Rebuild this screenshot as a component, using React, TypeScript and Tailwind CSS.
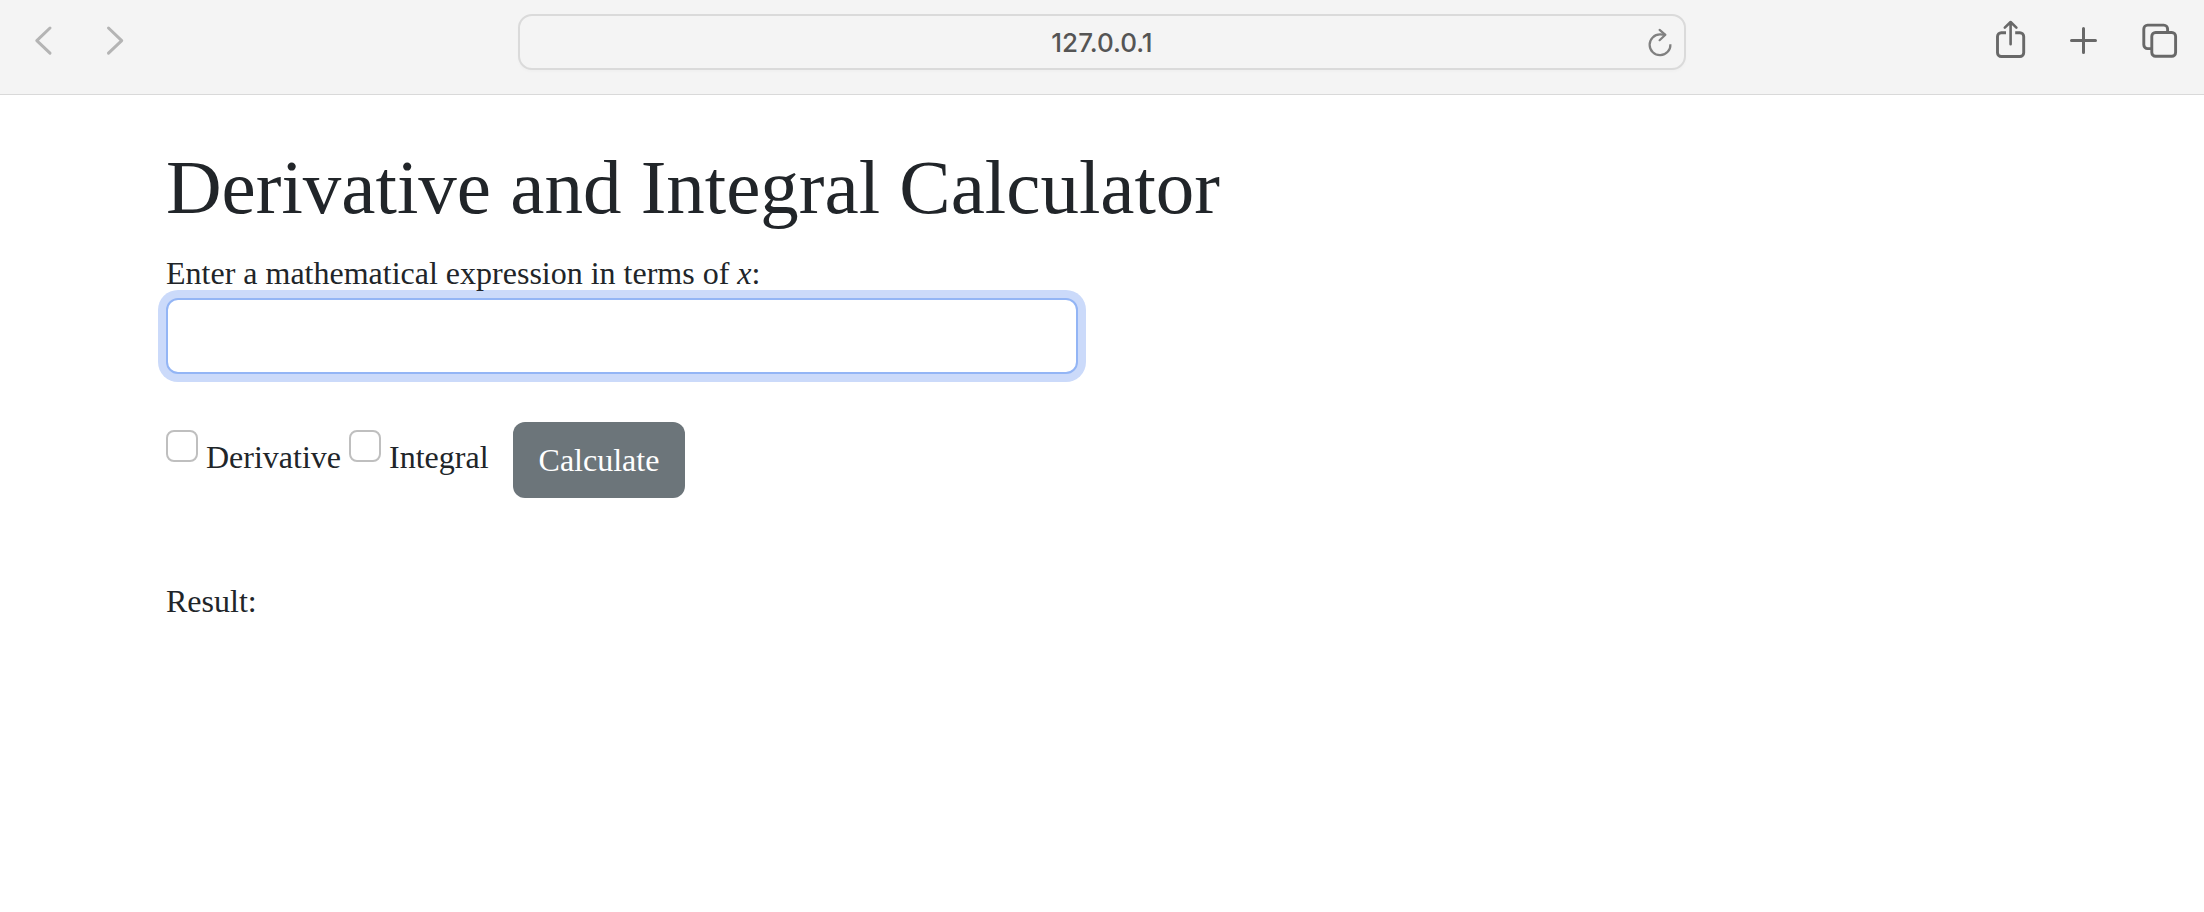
import { useState } from "react";

function Toolbar() {
  return (
    <header className="grid grid-cols-[1fr_53%_1fr] items-center border-b border-[#d9d9d9] bg-[#f4f4f4] pt-[14px] pb-6">
      <nav className="flex gap-12 pl-8 text-[#b4b4b4]" aria-label="History">
        <button type="button" aria-label="Back">
          <svg className="h-14 w-6" viewBox="0 0 24 56" fill="none" stroke="currentColor" strokeWidth="3" strokeLinecap="round" strokeLinejoin="round">
            <path d="M18 14 4.8 26.6 18 39.2" />
          </svg>
        </button>
        <button type="button" aria-label="Forward">
          <svg className="h-14 w-6" viewBox="0 0 24 56" fill="none" stroke="currentColor" strokeWidth="3" strokeLinecap="round" strokeLinejoin="round">
            <path d="M4.5 14 17.7 26.6 4.5 39.2" />
          </svg>
        </button>
      </nav>

      <div className="relative">
        <input
          type="text"
          aria-label="Address"
          defaultValue="127.0.0.1"
          className="block h-14 w-full rounded-[14px] border-2 border-[#dadada] bg-[#f4f4f4] px-12 text-center font-['Inter',sans-serif] text-[26px] font-medium text-[#555555] shadow-[0_2px_3px_rgba(0,0,0,0.02)] outline-none"
        />
        <button type="button" aria-label="Reload" className="absolute top-3 right-3 text-[#808080]">
          <svg className="h-8 w-7" viewBox="0 0 28 32" fill="none" stroke="currentColor" strokeWidth="2.2" strokeLinecap="round" strokeLinejoin="round">
            <path strokeLinecap="butt" d="M24.4 18.2A10.4 10.4 0 1 1 14.2 8.4L19.4 8.8" />
            <path d="M13.6 3.9 19.4 8.8 13.6 14.2" />
          </svg>
        </button>
      </div>

      <div className="flex justify-end gap-10 pr-6 text-[#686868]">
        <button type="button" aria-label="Share">
          <svg className="h-14 w-[34px]" viewBox="0 0 34 56" fill="none" stroke="currentColor" strokeWidth="2.9" strokeLinecap="round" strokeLinejoin="round">
            <path strokeLinecap="butt" d="M12 18.7H7.3a3.8 3.8 0 0 0-3.8 3.8V38.7a3.8 3.8 0 0 0 3.8 3.8H25.9a3.8 3.8 0 0 0 3.8-3.8V22.5a3.8 3.8 0 0 0-3.8-3.8H21.2" />
            <path strokeWidth="2.6" d="M16.6 30.2V8.2M10.8 13.6 16.6 8 22.4 13.6" />
          </svg>
        </button>
        <button type="button" aria-label="New tab">
          <svg className="h-14 w-8" viewBox="0 0 32 56" fill="none" stroke="currentColor" strokeWidth="3" strokeLinecap="round">
            <path d="M3.5 26.5H27.5M15.5 14.5V38.5" />
          </svg>
        </button>
        <button type="button" aria-label="Tab overview">
          <svg className="h-14 w-10" viewBox="0 0 40 56" fill="none" stroke="currentColor" strokeWidth="2.9">
            <rect x="11.8" y="18.5" width="23.8" height="23.8" rx="3.8" />
            <path d="M11.8 34.6H7.6a3.8 3.8 0 0 1-3.8-3.8V14.9A3.8 3.8 0 0 1 7.6 11.1H23.8a3.8 3.8 0 0 1 3.8 3.8V18.5" />
          </svg>
        </button>
      </div>
    </header>
  );
}

function CheckOption({ id, label }: { id: string; label: string }) {
  const [checked, setChecked] = useState(false);
  return (
    <div className="flex items-start gap-2">
      <input
        id={id}
        type="checkbox"
        checked={checked}
        onChange={(e) => setChecked(e.target.checked)}
        className="mt-2 size-8 appearance-none rounded-lg border-2 border-[#bfbfbf] bg-white checked:border-[#0d6efd] checked:bg-[#0d6efd]"
      />
      <label htmlFor={id} className="mt-[11px]">
        {label}
      </label>
    </div>
  );
}

export default function App() {
  return (
    <div className="min-h-screen bg-white">
      <Toolbar />
      <main className="mx-auto max-w-[1920px] px-6 pt-[46px] font-['Liberation_Serif',serif] text-[32px] leading-[48px] text-[#212529]">
        <h1 className="mb-4 text-[77px] leading-[92px]">Derivative and Integral Calculator</h1>
        <form onSubmit={(e) => e.preventDefault()}>
          <label htmlFor="expression" className="block">
            Enter a mathematical expression in terms of <i>x</i>:
          </label>
          <input
            id="expression"
            type="text"
            autoComplete="off"
            className="mt-px block h-[76px] w-[calc(50%-24px)] rounded-xl border-2 border-[#93b5f5] bg-white px-6 shadow-[0_0_0_8px_#cbdafa] outline-none"
          />
          <div className="mt-12 flex flex-wrap items-start gap-2">
            <CheckOption id="derivative" label="Derivative" />
            <CheckOption id="integral" label="Integral" />
            <button type="submit" className="ml-4 rounded-xl bg-[#6c757a] px-[26px] py-[14px] text-white">
              Calculate
            </button>
          </div>
        </form>
        <p className="mt-[79px]">Result:</p>
      </main>
    </div>
  );
}
